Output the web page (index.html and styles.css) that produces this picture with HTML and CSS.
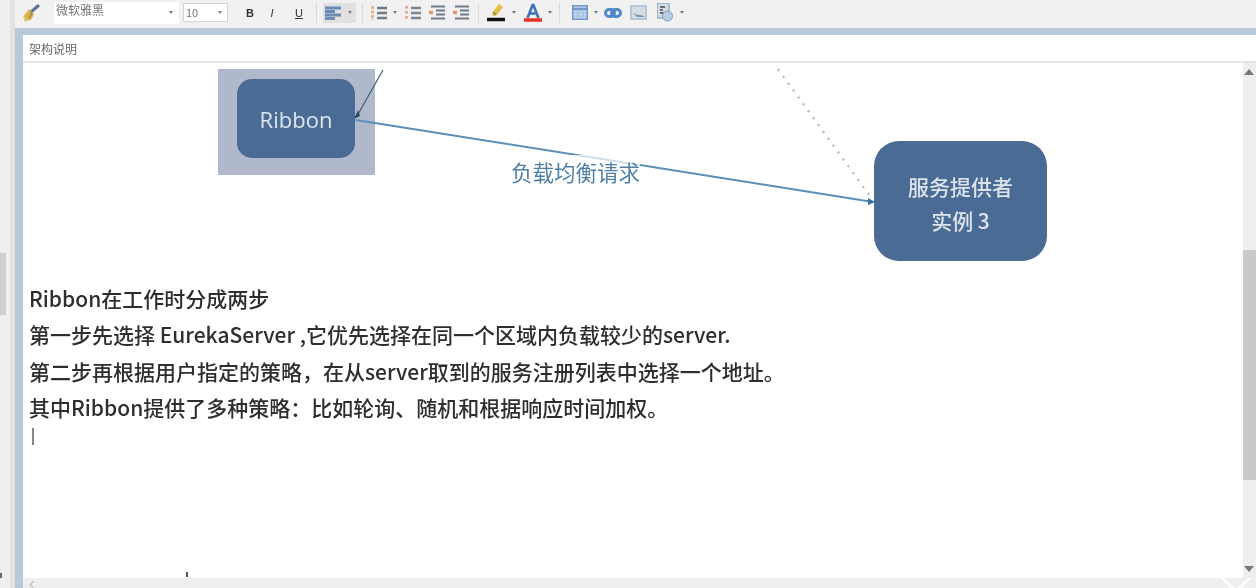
FILE: index.html
```html
<!DOCTYPE html>
<html lang="zh-CN">
<head>
    <meta charset="UTF-8">
    <title>架构说明</title>
    <link rel="stylesheet" href="styles.css">
</head>
<body>
    <div class="app">
        <aside class="side">
            <div class="side-thumb"></div>
            <div class="side-mark"></div>
        </aside>
        <div class="gutter"></div>
        <div class="workspace">
            <header class="toolbar">
                <svg class="tool brush" width="18" height="18" viewBox="0 0 18 18">
                    <path d="M17 1 9 8" stroke="#5f7396" stroke-width="3"/>
                    <path d="M7 5l5 5-3 6-7 1 1-3-2-1z" fill="#dcb448"/>
                    <path d="M8 8l2 2-3 4" stroke="#7d8a60" stroke-width="1.2" fill="none"/>
                </svg>
                <div class="select font-select"><span>微软雅黑</span><i class="caret"></i></div>
                <div class="select size-select"><span>10</span><i class="caret"></i></div>
                <span class="fmt fmt-b">B</span>
                <span class="fmt fmt-i">I</span>
                <span class="fmt fmt-u">U</span>
                <i class="sep sep-a"></i>
                <div class="align-btn">
                    <svg width="17" height="14" viewBox="0 0 17 14">
                        <path d="M0 2h16M0 5.500h10M0 9h16M0 12.500h10" stroke="#6a8bb5" stroke-width="2.800"/>
                    </svg>
                    <i class="caret"></i>
                </div>
                <i class="sep sep-b"></i>
                <svg class="tool list-a" width="16" height="16" viewBox="0 0 16 16">
                    <path d="M1.500 1v14" stroke="#e6b48e" stroke-width="3" stroke-dasharray="3 1.500"/>
                    <path d="M6 3h10M6 8h10M6 13h10" stroke="#6f7b89" stroke-width="2.400"/>
                </svg>
                <i class="caret list-caret"></i>
                <svg class="tool list-b" width="16" height="16" viewBox="0 0 16 16">
                    <path d="M1.500 1v14" stroke="#e6a98a" stroke-width="3" stroke-dasharray="2.500 2.500"/>
                    <path d="M6 3h10M6 8h10M6 13h10" stroke="#7a8693" stroke-width="2.400"/>
                </svg>
                <svg class="tool indent-a" width="16" height="16" viewBox="0 0 16 16">
                    <path d="M2 1.500h14M7 5.500h9M7 9.500h9M2 13.500h14" stroke="#6f7b89" stroke-width="2.200"/>
                    <path d="M0 7.500h4" stroke="#e39a72" stroke-width="3.500"/>
                </svg>
                <svg class="tool indent-b" width="16" height="16" viewBox="0 0 16 16">
                    <path d="M2 1.500h14M7 5.500h9M7 9.500h9M2 13.500h14" stroke="#6f7b89" stroke-width="2.200"/>
                    <path d="M0 7.500h4" stroke="#e39a72" stroke-width="3.500"/>
                </svg>
                <i class="sep sep-c"></i>
                <svg class="tool marker" width="18" height="20" viewBox="0 0 18 20">
                    <path d="M12 1l4 3-6 8-5 1 1-4z" fill="#e8c040"/>
                    <path d="M6 9l3 3" stroke="#8a7a50" stroke-width="1.500"/>
                    <path d="M0 16.500h18" stroke="#111" stroke-width="3.500"/>
                </svg>
                <i class="caret marker-caret"></i>
                <svg class="tool color-a" width="18" height="20" viewBox="0 0 18 20">
                    <path d="M9 1 3.500 15M9 1l5.500 14M5.500 10.500h7" stroke="#3f72b5" stroke-width="2.600" fill="none"/>
                    <path d="M0 17h18" stroke="#e6302a" stroke-width="3.500"/>
                </svg>
                <i class="caret color-caret"></i>
                <i class="sep sep-d"></i>
                <svg class="tool table" width="16" height="15" viewBox="0 0 16 15">
                    <rect x=".75" y=".75" width="14.500" height="13.500" fill="#c5d7ee" stroke="#6f97c8" stroke-width="1.500"/>
                    <path d="M1 4h14" stroke="#6f97c8" stroke-width="2.500"/>
                    <path d="M1 8h14M1 11h14M6 4v10M11 4v10" stroke="#9db9dc" stroke-width=".8"/>
                </svg>
                <i class="caret table-caret"></i>
                <svg class="tool link" width="18" height="10" viewBox="0 0 18 10">
                    <rect x="1.500" y="1.500" width="9" height="7" rx="3.500" fill="none" stroke="#4f8ac8" stroke-width="3"/>
                    <rect x="7.500" y="1.500" width="9" height="7" rx="3.500" fill="none" stroke="#4f8ac8" stroke-width="3"/>
                </svg>
                <svg class="tool image" width="17" height="15" viewBox="0 0 17 15">
                    <rect width="17" height="15" fill="#b9c6d4"/>
                    <rect x="2" y="2" width="13" height="11" fill="#d3dde6"/>
                    <path d="M3 8l4 4h8l-4-2-3 0z" fill="#7e97ad"/>
                </svg>
                <svg class="tool special" width="16" height="19" viewBox="0 0 16 19">
                    <rect x="0" y="0" width="12" height="15" fill="#d4dce6" stroke="#6f8fb5"/>
                    <path d="M3 4h5M3 7h3M3 10h4" stroke="#444" stroke-width="1.300"/>
                    <circle cx="10.500" cy="13" r="5" fill="#b9cde6" stroke="#7d9cc4"/>
                </svg>
                <i class="caret special-caret"></i>
            </header>
            <div class="blue-strip"></div>
            <div class="frame">
                <div class="title-row">架构说明</div>
                <div class="body-row">
                    <main class="editor">
                        <div class="diagram">
                            <div class="highlight"></div>
                            <svg class="wires" width="1221" height="215" viewBox="0 0 1221 215">
                                <path d="M360 7 334 53" stroke="#3f5a78" stroke-width="1.200"/>
                                <path d="M335 47l-4 9 6-3z" fill="#2f4a68"/>
                                <path d="M333 57 850 139" stroke="#5a90b8" stroke-width="2"/>
                                <path d="M845 135l7 4-7 3z" fill="#2f75a8"/>
                                <path d="M755 6 849 136" stroke="#b4bcc2" stroke-width="2.200" stroke-dasharray="2.200 6.300"/>
                            </svg>
                            <div class="node node-ribbon">Ribbon</div>
                            <div class="wire-label">负载均衡请求</div>
                            <div class="node node-provider">服务提供者<br>实例 3</div>
                        </div>
                        <div class="notes">
                            <p>Ribbon在工作时分成两步</p>
                            <p>第一步先选择 EurekaServer ,它优先选择在同一个区域内负载较少的server.</p>
                            <p>第二步再根据用户指定的策略，在从server取到的服务注册列表中选择一个地址。</p>
                            <p>其中Ribbon提供了多种策略：比如轮询、随机和根据响应时间加权。</p>
                            <i class="text-cursor"></i>
                        </div>
                        <i class="tick"></i>
                    </main>
                    <div class="vscroll">
                        <i class="arrow-up"></i>
                        <div class="vthumb"></div>
                        <i class="arrow-down"></i>
                    </div>
                </div>
                <footer class="hscroll">
                    <svg class="arrow-left" width="6" height="8" viewBox="0 0 6 8"><path d="M5 0 1 4l4 4" stroke="#bbb" stroke-width="1.200" fill="none"/></svg>
                    <svg class="corner-mark" width="32" height="11" viewBox="0 0 32 11"><path d="M2 0 14 11M30 0 18 11" stroke="#fff" stroke-width="2.500"/></svg>
                </footer>
            </div>
        </div>
    </div>
</body>
</html>
```

FILE: styles.css
```css
html, body {
    margin: 0;
    padding: 0;
    height: 100%;
    overflow: hidden;
    background-color: #fff;
}

body {
    font-family: "Noto Sans CJK SC", "Noto Sans", sans-serif;
    color: #333;
}

.app {
    display: flex;
    width: 1256px;
    height: 588px;
    overflow: hidden;
    filter: blur(0.6px);
}

.side {
    position: relative;
    width: 10px;
    background-color: #efefef;
}

.side-thumb {
    position: absolute;
    left: 0;
    top: 253px;
    width: 6px;
    height: 62px;
    background-color: #cfcfcf;
}

.side-mark {
    position: absolute;
    left: 0;
    top: 573px;
    width: 2px;
    height: 5px;
    background-color: #666;
}

.gutter {
    width: 5px;
    background-color: #e2e2e2;
}

.workspace {
    flex: 1;
    display: flex;
    flex-direction: column;
    min-width: 0;
}

/* toolbar */
.toolbar {
    display: flex;
    align-items: center;
    height: 28px;
    padding: 0 0 3px 7px;
    box-sizing: border-box;
    background-color: #f1f1f1;
}

.tool {
    flex: none;
}

.caret {
    display: inline-block;
    width: 0;
    height: 0;
    border-left: 2.500px solid transparent;
    border-right: 2.500px solid transparent;
    border-top: 3px solid #777;
}

.select {
    display: flex;
    justify-content: space-between;
    box-sizing: border-box;
    background-color: #fff;
    color: #777;
    font-size: 11px;
}

.select .caret {
    align-self: center;
}

.font-select {
    width: 125px;
    height: 22px;
    margin-left: 14px;
    padding: 0 6px 0 2px;
    font-size: 12px;
    line-height: 16px;
}

.size-select {
    width: 45px;
    height: 19px;
    margin-left: 4px;
    padding: 0 5px 0 2px;
    border: 1px solid #d4d4d4;
    line-height: 17px;
}

.fmt {
    width: 12px;
    text-align: center;
    font-family: "Liberation Sans", sans-serif;
    font-size: 11px;
    color: #333;
}

.fmt-b {
    margin-left: 16px;
    font-weight: bold;
}

.fmt-i {
    margin-left: 10px;
    font-style: italic;
}

.fmt-u {
    margin-left: 15px;
    text-decoration: underline;
}

.sep {
    width: 1px;
    height: 20px;
    background-color: #dcdcdc;
}

.sep-a { margin-left: 11px; }
.sep-b { margin-left: 6px; }
.sep-c { margin-left: 9px; }
.sep-d { margin-left: 7px; }

.align-btn {
    display: flex;
    align-items: center;
    justify-content: space-between;
    box-sizing: border-box;
    width: 33px;
    height: 20px;
    margin-left: 6px;
    padding: 0 4px 0 2px;
    background-color: #e0e0e0;
}

.list-a { margin-left: 8px; }
.list-caret { margin-left: 6px; }
.list-b { margin-left: 8px; }
.indent-a { margin-left: 8px; }
.indent-b { margin-left: 8px; }
.marker { margin-left: 8px; }
.marker-caret { margin-left: 7px; }
.color-a { margin-left: 8px; }
.color-caret { margin-left: 6px; }
.table { margin-left: 12px; }
.table-caret { margin-left: 6px; }
.link { margin-left: 6px; }
.image { margin-left: 8px; }
.special { margin-left: 10px; }
.special-caret { margin-left: 7px; }

.blue-strip {
    height: 7px;
    background-color: #b7cadb;
}

/* editor frame */
.frame {
    flex: 1;
    display: flex;
    flex-direction: column;
    min-height: 0;
    border-left: 8px solid #b7cadb;
}

.title-row {
    height: 26px;
    padding-left: 6px;
    border-bottom: 2px solid #e4e4e4;
    background-color: #fff;
    font-size: 12px;
    line-height: 27px;
    color: #666;
}

.body-row {
    flex: 1;
    display: flex;
    min-height: 0;
}

.editor {
    position: relative;
    flex: 1;
    min-width: 0;
    background-color: #fff;
}

.diagram {
    position: relative;
    height: 217px;
}

.highlight {
    position: absolute;
    left: 195px;
    top: 6px;
    width: 157px;
    height: 106px;
    background-color: #b0b9cb;
}

.wires {
    position: absolute;
    left: 0;
    top: 0;
}

.node {
    position: absolute;
    display: flex;
    align-items: center;
    justify-content: center;
    box-sizing: border-box;
    text-align: center;
    background-color: #4a6c94;
    color: #dde4ec;
}

.node-ribbon {
    left: 214px;
    top: 16px;
    width: 118px;
    height: 79px;
    padding-top: 1px;
    border-radius: 15px;
    font-family: "Open Sans", sans-serif;
    font-size: 22px;
    font-weight: 500;
}

.node-provider {
    left: 851px;
    top: 78px;
    width: 173px;
    height: 120px;
    padding-top: 3px;
    border-radius: 25px;
    font-size: 21px;
    font-weight: 500;
    line-height: 34px;
}

.wire-label {
    position: absolute;
    left: 488px;
    top: 92px;
    font-size: 21.500px;
    line-height: 34px;
    color: #4f7fa6;
    background-color: rgba(255, 255, 255, 0.7);
}

.notes {
    position: relative;
    padding-left: 6px;
    font-size: 21px;
    font-weight: 500;
    line-height: 36.300px;
    color: #2e2e2e;
}

.notes p {
    margin: 0;
    white-space: nowrap;
}

.text-cursor {
    display: block;
    width: 2px;
    height: 17px;
    margin: 3px 0 0 3px;
    background-color: #888;
}

.tick {
    position: absolute;
    left: 163px;
    bottom: 1px;
    width: 2px;
    height: 5px;
    background-color: #555;
}

/* scrollbars */
.vscroll {
    position: relative;
    display: flex;
    flex-direction: column;
    width: 13px;
    padding-top: 187px;
    box-sizing: border-box;
    background-color: #eee;
}

.vthumb {
    height: 230px;
    background-color: #c9c9c9;
}

.arrow-up, .arrow-down {
    position: absolute;
    left: 1px;
    width: 0;
    height: 0;
    border-left: 5px solid transparent;
    border-right: 5px solid transparent;
}

.arrow-up {
    top: 6px;
    border-bottom: 6px solid #777;
}

.arrow-down {
    bottom: 6px;
    border-top: 6px solid #777;
}

.hscroll {
    position: relative;
    flex: none;
    height: 10px;
    overflow: hidden;
    background-color: #eee;
}

.arrow-left {
    position: absolute;
    left: 6px;
    top: 3px;
}

.corner-mark {
    position: absolute;
    right: 4px;
    top: 0;
}
```
